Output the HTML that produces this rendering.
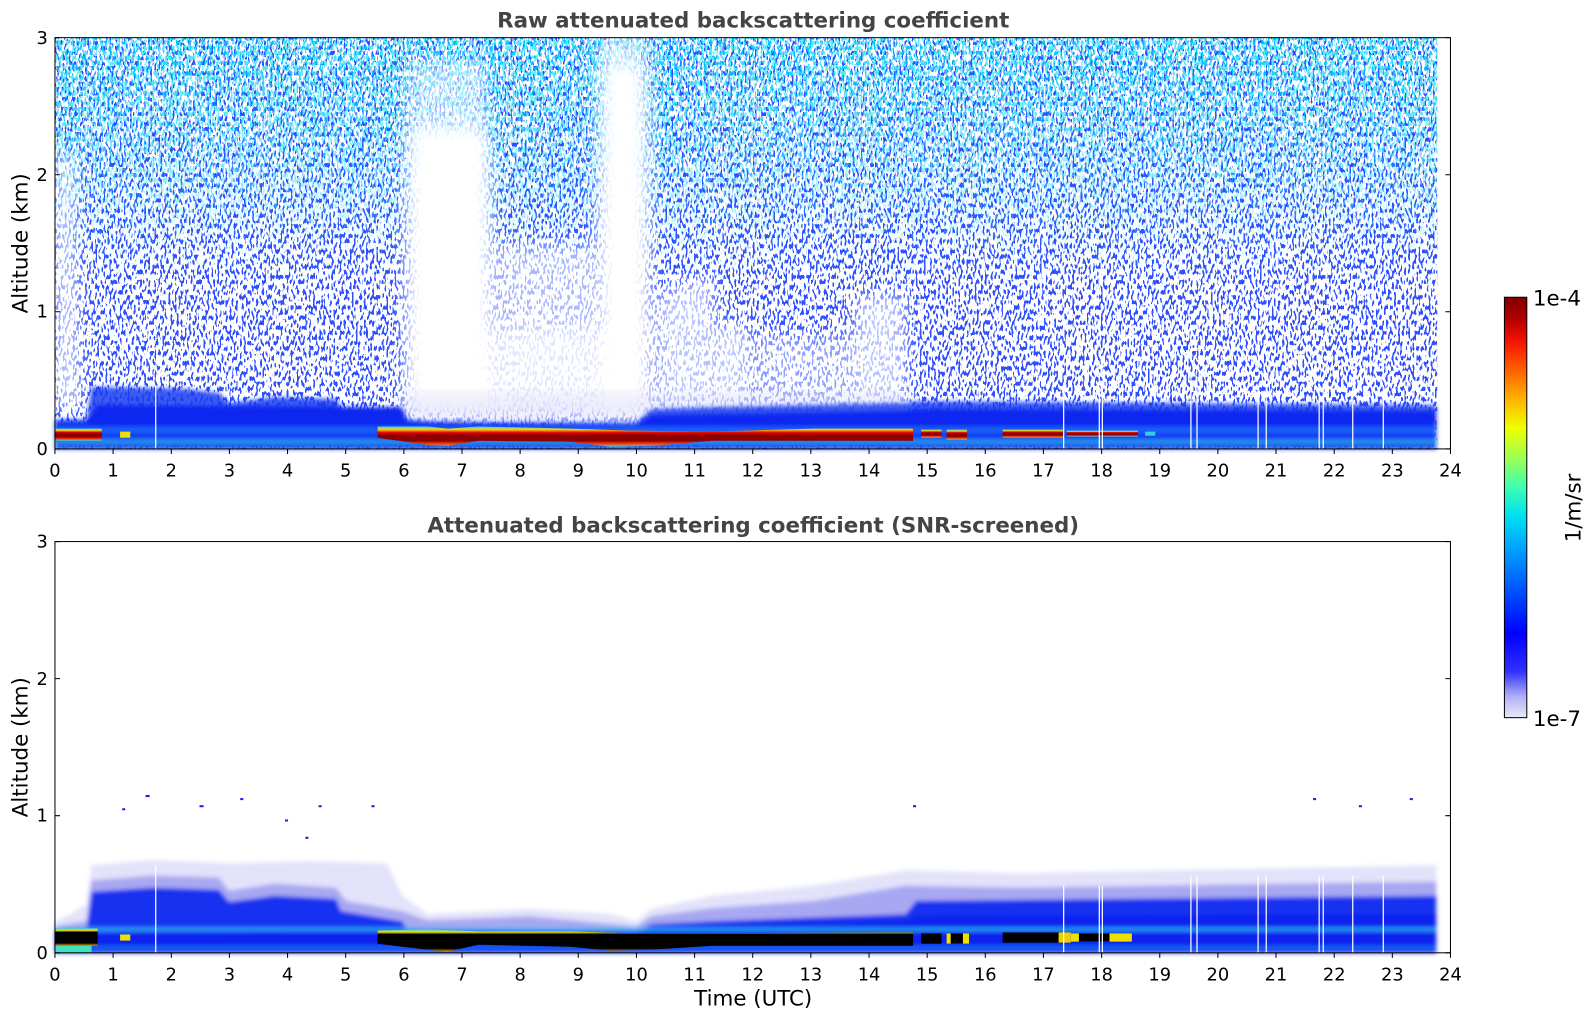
<!DOCTYPE html>
<html><head><meta charset="utf-8"><style>
html,body{margin:0;padding:0;background:#fff;}
svg{display:block;}
text{font-family:"DejaVu Sans","Liberation Sans",sans-serif;}
</style></head><body>
<svg width="1595" height="1020" viewBox="0 0 1567 1002" preserveAspectRatio="none" xmlns="http://www.w3.org/2000/svg">
<defs>
<filter id="fB" filterUnits="userSpaceOnUse" x="54" y="37" width="1358" height="404">
 <feTurbulence type="fractalNoise" baseFrequency="0.5 0.2" numOctaves="1" seed="2"/>
 <feColorMatrix type="matrix" values="0 0 0 0 0.03  0 0 0 0 0.08  0 0 0 0 1  60 0 0 0 -32.8"/>
</filter>
<filter id="fC" filterUnits="userSpaceOnUse" x="54" y="37" width="1358" height="404">
 <feTurbulence type="fractalNoise" baseFrequency="0.48 0.2" numOctaves="1" seed="7"/>
 <feColorMatrix type="matrix" values="0 0 0 0 0.1  0 0 0 0 0.82  0 0 0 0 0.92  60 0 0 0 -33.4"/>
</filter>
<filter id="fL" filterUnits="userSpaceOnUse" x="54" y="37" width="1358" height="404">
 <feTurbulence type="fractalNoise" baseFrequency="0.48 0.2" numOctaves="1" seed="11"/>
 <feColorMatrix type="matrix" values="0 0 0 0 0.0  0 0 0 0 0.55  0 0 0 0 1  60 0 0 0 -34"/>
</filter>
<filter id="blur6"><feGaussianBlur stdDeviation="8"/></filter>
<filter id="blur2"><feGaussianBlur stdDeviation="2"/></filter>
<linearGradient id="gC" x1="0" y1="37" x2="0" y2="441" gradientUnits="userSpaceOnUse">
 <stop offset="0" stop-color="#fff"/><stop offset="0.3" stop-color="#999"/><stop offset="0.6" stop-color="#000"/><stop offset="1" stop-color="#000"/>
</linearGradient>
<linearGradient id="gL" x1="0" y1="37" x2="0" y2="441" gradientUnits="userSpaceOnUse">
 <stop offset="0" stop-color="#fff"/><stop offset="0.25" stop-color="#888"/><stop offset="0.5" stop-color="#000"/>
</linearGradient>
<mask id="mGap" maskUnits="userSpaceOnUse" x="0" y="0" width="1567" height="1002">
 <rect x="54" y="37" width="1358" height="404" fill="#fff"/>
 <g filter="url(#blur6)">
  <polygon points="400,120 420,90 450,90 480,110 488,410 398,410" fill="#000"/>
  <polygon points="400,60 480,60 480,120 400,120" fill="#777"/>
  <polygon points="590,60 635,60 640,410 585,410" fill="#000"/>
  <polygon points="590,37 635,37 635,60 590,60" fill="#555"/>
  <polygon points="488,320 585,320 585,410 488,410" fill="#222"/>
  <polygon points="488,240 585,240 585,320 488,320" fill="#666"/>
  <polygon points="54,150 72,150 78,400 54,400" fill="#444"/>
  <polygon points="645,290 700,270 705,400 645,400" fill="#555"/>
  <polygon points="705,320 735,320 735,400 705,400" fill="#444"/>
  <polygon points="840,290 890,290 890,400 840,400" fill="#555"/>
  <polygon points="740,330 840,330 840,400 740,400" fill="#888"/>
 </g>
</mask>
<mask id="mC" maskUnits="userSpaceOnUse" x="0" y="0" width="1567" height="1002">
 <rect x="54" y="37" width="1358" height="404" fill="url(#gC)"/>
</mask>
<mask id="mL" maskUnits="userSpaceOnUse" x="0" y="0" width="1567" height="1002">
 <rect x="54" y="37" width="1358" height="404" fill="url(#gL)"/>
</mask>
<linearGradient id="cbar" x1="0" y1="1" x2="0" y2="0">
 <stop offset="0" stop-color="#e8e8fa"/><stop offset="0.05" stop-color="#b0b0f8"/><stop offset="0.08" stop-color="#7070f8"/>
 <stop offset="0.11" stop-color="#3030ff"/><stop offset="0.2" stop-color="#0000ff"/><stop offset="0.3" stop-color="#0050ff"/>
 <stop offset="0.4" stop-color="#00a0ff"/><stop offset="0.48" stop-color="#00e0f0"/><stop offset="0.55" stop-color="#40ffb0"/>
 <stop offset="0.62" stop-color="#a0ff50"/><stop offset="0.69" stop-color="#f0ff00"/><stop offset="0.76" stop-color="#ffb000"/>
 <stop offset="0.84" stop-color="#ff5000"/><stop offset="0.9" stop-color="#f01000"/><stop offset="0.95" stop-color="#b00000"/><stop offset="1" stop-color="#800000"/>
</linearGradient>
<linearGradient id="redband" x1="0" y1="0" x2="0" y2="1">
 <stop offset="0" stop-color="#40d0f0"/><stop offset="0.15" stop-color="#ffd000"/><stop offset="0.3" stop-color="#e00000"/>
 <stop offset="0.45" stop-color="#880000"/><stop offset="0.7" stop-color="#900000"/><stop offset="0.85" stop-color="#ff4000"/><stop offset="1" stop-color="#40d0f0"/>
</linearGradient>
<linearGradient id="blkband" x1="0" y1="0" x2="0" y2="1">
 <stop offset="0" stop-color="#40d0f0"/><stop offset="0.12" stop-color="#f0e000"/><stop offset="0.22" stop-color="#000"/>
 <stop offset="0.85" stop-color="#000"/><stop offset="1" stop-color="#f0a000"/>
</linearGradient>
</defs>

<!-- TOP PLOT -->
<g mask="url(#mGap)">
 <rect x="54" y="37" width="1358" height="404" fill="#000" filter="url(#fB)"/>
 <rect x="54" y="37" width="1358" height="404" fill="#000" filter="url(#fL)" mask="url(#mL)"/>
 <rect x="54" y="37" width="1358" height="404" fill="#000" filter="url(#fC)" mask="url(#mC)"/>
</g>
<rect x="395" y="385" width="500" height="30" fill="#dcdcf8" opacity="0.5" filter="url(#blur6)"/>
<!-- boundary layer -->
<g filter="url(#blur2)">
<polygon points="54,441 54,412 85,412 90,380 180,382 215,386 225,396 270,390 330,392 335,400 395,404 400,412 430,415 625,415 640,402 700,400 890,396 900,394 1411,398 1411,441" fill="#1a3cf0" opacity="0.85"/>
<polygon points="54,441 54,415 85,415 95,398 395,400 400,414 625,417 640,408 890,404 900,402 1411,404 1411,441" fill="#0a28f0"/>
<rect x="54" y="419" width="1357" height="7" fill="#1e6cff" opacity="0.8"/>
<rect x="54" y="431" width="1357" height="7" fill="#30a8f0" opacity="0.8"/>
<rect x="54" y="437" width="1357" height="4" fill="#0830e8"/>
</g>
<g>
<polygon points="371,419 420,419 440,421 470,419 560,421 620,423 700,424 800,421 897,421 897,433 800,433 700,433 640,438 600,439 560,434 470,433 440,438 420,437 371,430" fill="url(#redband)"/>
<rect x="54" y="421" width="46" height="12" fill="url(#redband)"/>
<rect x="118" y="424" width="10" height="6" fill="#f0e000"/>
<rect x="905" y="422" width="20" height="8" fill="url(#redband)"/>
<rect x="930" y="422" width="20" height="10" fill="url(#redband)"/>
<rect x="985" y="422" width="60" height="8" fill="url(#redband)"/>
<rect x="1048" y="423" width="70" height="6" fill="url(#redband)"/>
<rect x="1125" y="424" width="10" height="4" fill="#30d0e0"/>
</g>
<g stroke="#fff" stroke-width="1.2">
<line x1="153" y1="380" x2="153" y2="441"/><line x1="1045" y1="390" x2="1045" y2="441"/>
<line x1="1080" y1="380" x2="1080" y2="441"/><line x1="1083" y1="380" x2="1083" y2="441"/>
<line x1="1170" y1="370" x2="1170" y2="441"/><line x1="1176" y1="370" x2="1176" y2="441"/>
<line x1="1236" y1="380" x2="1236" y2="441"/><line x1="1244" y1="380" x2="1244" y2="441"/>
<line x1="1296" y1="380" x2="1296" y2="441"/><line x1="1300" y1="380" x2="1300" y2="441"/>
<line x1="1329" y1="380" x2="1329" y2="441"/><line x1="1359" y1="380" x2="1359" y2="441"/>
</g>

<!-- BOTTOM PLOT -->
<g filter="url(#blur2)">
<polygon points="54,936 54,905 70,898 85,888 90,850 150,845 230,848 300,846 380,848 395,880 420,898 520,893 600,898 625,905 640,893 700,880 800,870 890,855 1000,858 1150,855 1411,850 1411,936" fill="#e2e2fa"/>
<polygon points="54,936 54,910 85,905 90,865 150,860 215,862 225,875 270,868 330,872 340,885 395,895 420,904 520,900 625,910 640,900 700,892 800,885 890,870 1000,872 1411,866 1411,936" fill="#a8a8f2"/>
<polygon points="54,936 54,915 85,912 90,876 150,872 215,874 225,886 270,880 330,883 335,895 395,905 400,913 625,915 640,908 700,905 890,898 900,885 1411,880 1411,936" fill="#1832f0"/>
<polygon points="54,936 54,918 395,912 400,916 625,918 640,912 890,905 900,900 1411,898 1411,936" fill="#0a24ee"/>
<rect x="54" y="911" width="1357" height="4" fill="#30b8f0" opacity="0.8"/>
<rect x="54" y="929" width="1357" height="4" fill="#2080f8" opacity="0.7"/>
</g>
<g>
<rect x="54" y="912" width="42" height="17" fill="url(#blkband)"/>
<rect x="54" y="929" width="36" height="7" fill="#40e0c0"/>
<polygon points="371,914 420,913 470,915 560,915 630,917 897,916 897,929 700,929 640,933 600,934 560,930 470,928 440,935 420,933 371,927" fill="url(#blkband)"/>
<rect x="905" y="917" width="20" height="10" fill="#000"/>
<rect x="930" y="917" width="22" height="10" fill="#f0e000"/><rect x="934" y="917" width="12" height="10" fill="#000"/>
<rect x="985" y="916" width="60" height="10" fill="#000"/><rect x="1040" y="916" width="12" height="10" fill="#f0d000"/>
<rect x="1052" y="917" width="60" height="8" fill="#f0e000"/><rect x="1060" y="917" width="30" height="8" fill="#000"/>
<rect x="118" y="918" width="10" height="6" fill="#f0e000"/>
</g>
<g fill="#1020f0">
<rect x="143" y="781" width="4" height="2"/><rect x="196" y="791" width="4" height="2"/><rect x="236" y="784" width="3" height="2"/>
<rect x="313" y="791" width="3" height="2"/><rect x="365" y="791" width="3" height="2"/><rect x="897" y="791" width="3" height="2"/>
<rect x="1290" y="784" width="3" height="2"/><rect x="1335" y="791" width="3" height="2"/><rect x="1385" y="784" width="3" height="2"/>
<rect x="120" y="794" width="3" height="2"/><rect x="280" y="805" width="3" height="2"/><rect x="300" y="822" width="3" height="2"/>
</g>
<g stroke="#fff" stroke-width="1.2">
<line x1="153" y1="850" x2="153" y2="936"/><line x1="1045" y1="870" x2="1045" y2="936"/>
<line x1="1080" y1="870" x2="1080" y2="936"/><line x1="1083" y1="870" x2="1083" y2="936"/>
<line x1="1170" y1="860" x2="1170" y2="936"/><line x1="1176" y1="860" x2="1176" y2="936"/>
<line x1="1236" y1="860" x2="1236" y2="936"/><line x1="1244" y1="860" x2="1244" y2="936"/>
<line x1="1296" y1="860" x2="1296" y2="936"/><line x1="1300" y1="860" x2="1300" y2="936"/>
<line x1="1329" y1="860" x2="1329" y2="936"/><line x1="1359" y1="860" x2="1359" y2="936"/>
</g>

<!-- AXES -->
<g fill="none" stroke="#000" stroke-width="1">
<rect x="54" y="37" width="1371" height="404"/>
<rect x="54" y="532" width="1371" height="404"/>
</g>
<g stroke="#000" stroke-width="1">
<path d="M54 441v5M111.1 441v5M168.3 441v5M225.4 441v5M282.5 441v5M339.6 441v5M396.8 441v5M453.9 441v5M511 441v5M568.1 441v5M625.3 441v5M682.4 441v5M739.5 441v5M796.6 441v5M853.8 441v5M910.9 441v5M968 441v5M1025.1 441v5M1082.3 441v5M1139.4 441v5M1196.5 441v5M1253.6 441v5M1310.8 441v5M1367.9 441v5M1425 441v5"/>
<path d="M54 936v5M111.1 936v5M168.3 936v5M225.4 936v5M282.5 936v5M339.6 936v5M396.8 936v5M453.9 936v5M511 936v5M568.1 936v5M625.3 936v5M682.4 936v5M739.5 936v5M796.6 936v5M853.8 936v5M910.9 936v5M968 936v5M1025.1 936v5M1082.3 936v5M1139.4 936v5M1196.5 936v5M1253.6 936v5M1310.8 936v5M1367.9 936v5M1425 936v5"/>
<path d="M54 441h5M54 306.3h5M54 171.7h5M54 37h5M1425 441h-5M1425 306.3h-5M1425 171.7h-5M1425 37h-5"/>
<path d="M54 936h5M54 801.3h5M54 666.7h5M54 532h5M1425 936h-5M1425 801.3h-5M1425 666.7h-5M1425 532h-5"/>
</g>
<g font-size="17.5" fill="#000" text-anchor="middle">
<text x="54" y="468">0</text><text x="111.1" y="468">1</text><text x="168.3" y="468">2</text><text x="225.4" y="468">3</text><text x="282.5" y="468">4</text><text x="339.6" y="468">5</text><text x="396.8" y="468">6</text><text x="453.9" y="468">7</text><text x="511" y="468">8</text><text x="568.1" y="468">9</text><text x="625.3" y="468">10</text><text x="682.4" y="468">11</text><text x="739.5" y="468">12</text><text x="796.6" y="468">13</text><text x="853.8" y="468">14</text><text x="910.9" y="468">15</text><text x="968" y="468">16</text><text x="1025.1" y="468">17</text><text x="1082.3" y="468">18</text><text x="1139.4" y="468">19</text><text x="1196.5" y="468">20</text><text x="1253.6" y="468">21</text><text x="1310.8" y="468">22</text><text x="1367.9" y="468">23</text><text x="1425" y="468">24</text>
<text x="54" y="963">0</text><text x="111.1" y="963">1</text><text x="168.3" y="963">2</text><text x="225.4" y="963">3</text><text x="282.5" y="963">4</text><text x="339.6" y="963">5</text><text x="396.8" y="963">6</text><text x="453.9" y="963">7</text><text x="511" y="963">8</text><text x="568.1" y="963">9</text><text x="625.3" y="963">10</text><text x="682.4" y="963">11</text><text x="739.5" y="963">12</text><text x="796.6" y="963">13</text><text x="853.8" y="963">14</text><text x="910.9" y="963">15</text><text x="968" y="963">16</text><text x="1025.1" y="963">17</text><text x="1082.3" y="963">18</text><text x="1139.4" y="963">19</text><text x="1196.5" y="963">20</text><text x="1253.6" y="963">21</text><text x="1310.8" y="963">22</text><text x="1367.9" y="963">23</text><text x="1425" y="963">24</text>
</g>
<g font-size="17.5" fill="#000" text-anchor="end">
<text x="47" y="447">0</text><text x="47" y="312">1</text><text x="47" y="178">2</text><text x="47" y="43">3</text>
<text x="47" y="942">0</text><text x="47" y="807">1</text><text x="47" y="673">2</text><text x="47" y="538">3</text>
</g>
<g font-size="21" fill="#000" text-anchor="middle">
<text transform="translate(27,239) rotate(-90)">Altitude (km)</text>
<text transform="translate(27,734) rotate(-90)">Altitude (km)</text>
<text x="740" y="988">Time (UTC)</text>
</g>
<g font-size="21" font-weight="bold" fill="#444" text-anchor="middle">
<text x="740" y="27">Raw attenuated backscattering coefficient</text>
<text x="740" y="523">Attenuated backscattering coefficient (SNR-screened)</text>
</g>
<rect x="1478" y="292" width="22" height="413" fill="url(#cbar)" stroke="#000" stroke-width="1"/>
<g font-size="21" fill="#000">
<text x="1506" y="300">1e-4</text>
<text x="1506" y="713">1e-7</text>
<text transform="translate(1553,499) rotate(-90)" text-anchor="middle">1/m/sr</text>
</g>
</svg>
</body></html>
